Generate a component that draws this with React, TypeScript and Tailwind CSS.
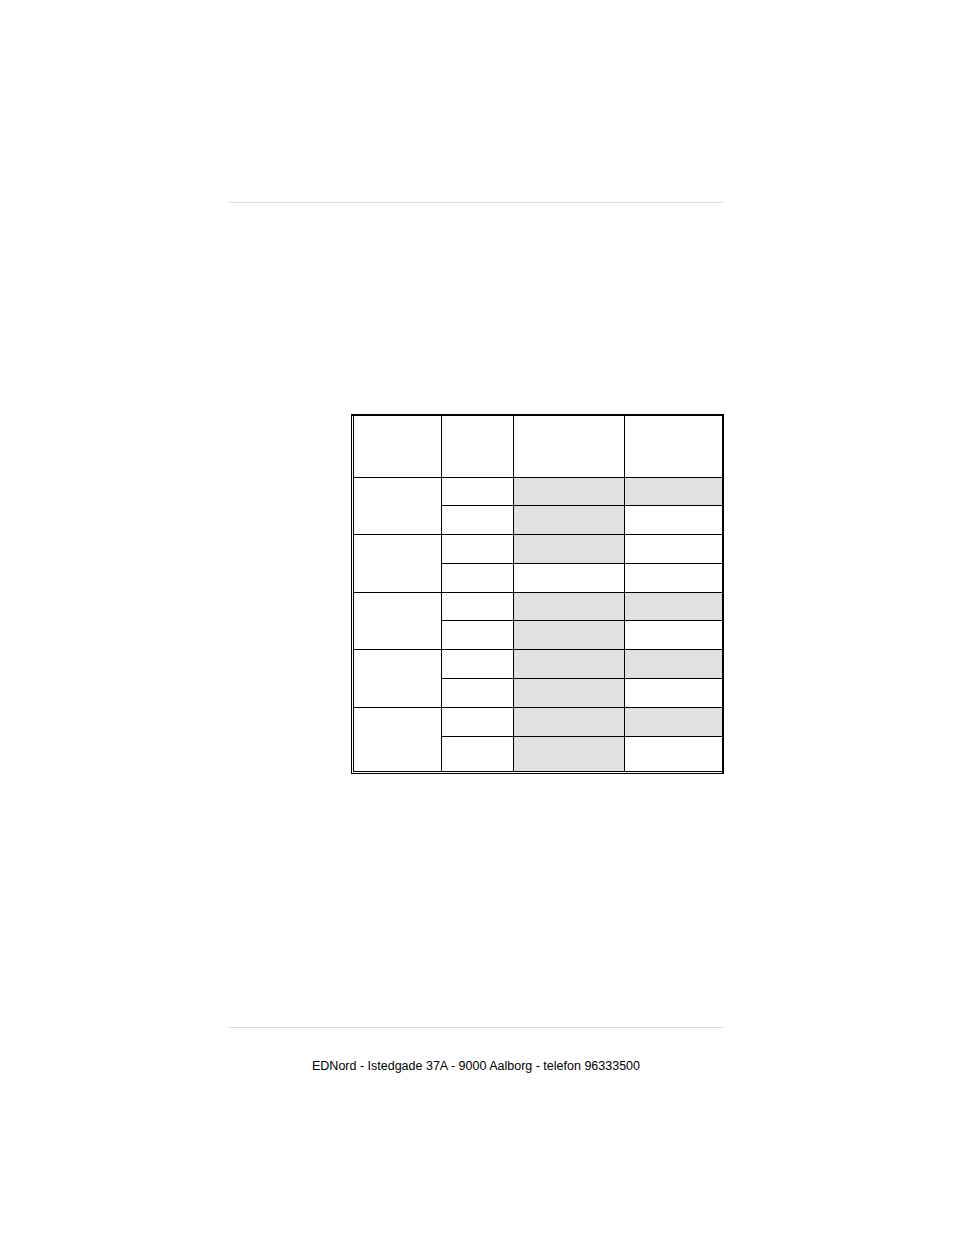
const rows = [
  // [group start, col3 gray, col4 gray, height]
  { g: true, c3: true, c4: true, h: "h-[27px]" },
  { g: false, c3: true, c4: false, h: "h-[28px]" },
  { g: true, c3: true, c4: false, h: "h-[28px]" },
  { g: false, c3: false, c4: false, h: "h-[28px]" },
  { g: true, c3: true, c4: true, h: "h-[27px]" },
  { g: false, c3: true, c4: false, h: "h-[28px]" },
  { g: true, c3: true, c4: true, h: "h-[28px]" },
  { g: false, c3: true, c4: false, h: "h-[28px]" },
  { g: true, c3: true, c4: true, h: "h-[28px]" },
  { g: false, c3: true, c4: false, h: "h-[34px]" },
];

export default function App() {
  return (
    <div className="min-h-[1235px] w-full bg-white font-['Liberation_Sans',Arial,sans-serif] text-black">
      <div className="ml-[229px] w-[494px] pt-[202px]">
        <div className="h-px bg-[#dedede]" />

        <div className="ml-[122px] mt-[211px] w-[373px] border-t-2 border-r-2 border-l border-b border-black bg-white pl-px pb-px">
          <div className="grid grid-cols-[87px_71px_110px_97px] gap-px bg-black pl-px pb-px">
            <div className="h-[61px] bg-white" />
            <div className="h-[61px] bg-white" />
            <div className="h-[61px] bg-white" />
            <div className="h-[61px] bg-white" />
            {rows.map((r, i) => (
              <Row key={i} {...r} />
            ))}
          </div>
        </div>

        <div className="mt-[253px] h-px bg-[#dedede]" />
        <p className="mt-[30px] text-center text-[12.5px] leading-4">
          EDNord - Istedgade 37A - 9000 Aalborg - telefon 96333500
        </p>
      </div>
    </div>
  );
}

function Row({ g, c3, c4, h }: { g: boolean; c3: boolean; c4: boolean; h: string }) {
  return (
    <>
      {g && <div className="row-span-2 bg-white" />}
      <div className={`${h} bg-white`} />
      <div className={c3 ? "bg-[#e0e0e0]" : "bg-white"} />
      <div className={c4 ? "bg-[#e0e0e0]" : "bg-white"} />
    </>
  );
}
